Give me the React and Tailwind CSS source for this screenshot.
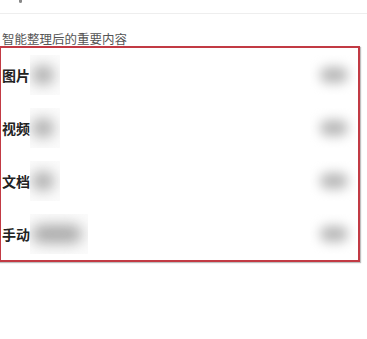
import React from "react";

function Row({ label, leftW }) {
  return (
    <div className="flex h-[53px] items-center">
      <span className="w-[28px] shrink-0 text-[14px] font-bold leading-none text-[#222]">{label}</span>
      <div className="relative h-[40px] overflow-hidden bg-[#fbfbfb]" style={{ width: leftW }}>
        <div className="absolute left-[2px] top-[11px] h-[18px] rounded-full bg-[#a8a8a8] blur-[7px]" style={{ width: leftW - 8 }} />
      </div>
      <div className="flex-1" />
      <div className="relative mr-[2px] h-[40px] w-[46px] overflow-hidden">
        <div className="absolute left-[10px] top-[12px] h-[16px] w-[28px] rounded-full bg-[#b8b8b8] blur-[6px]" />
      </div>
    </div>
  );
}

export default function App() {
  return (
    <div className="h-[339px] w-[367px] overflow-hidden bg-white" style={{ fontFamily: '"Noto Sans CJK SC", "Noto Sans", sans-serif' }}>
      <div className="relative h-[14px] border-b border-[#eeeeee]">
        <div className="absolute left-[19px] top-[-3px] h-[6px] w-[3px] rounded-full bg-[#888]" />
      </div>
      <div className="mt-[18px] pl-[2px] text-[12.5px] leading-[14px] text-[#555]">智能整理后的重要内容</div>
      <div className="-ml-[1px] w-[361px] border-2 border-[#c23a44] pl-[1px] shadow-[1px_1px_1px_rgba(0,0,0,0.25)]">
        <Row label="图片" leftW={30} />
        <Row label="视频" leftW={30} />
        <Row label="文档" leftW={30} />
        <Row label="手动" leftW={58} />
      </div>
    </div>
  );
}
